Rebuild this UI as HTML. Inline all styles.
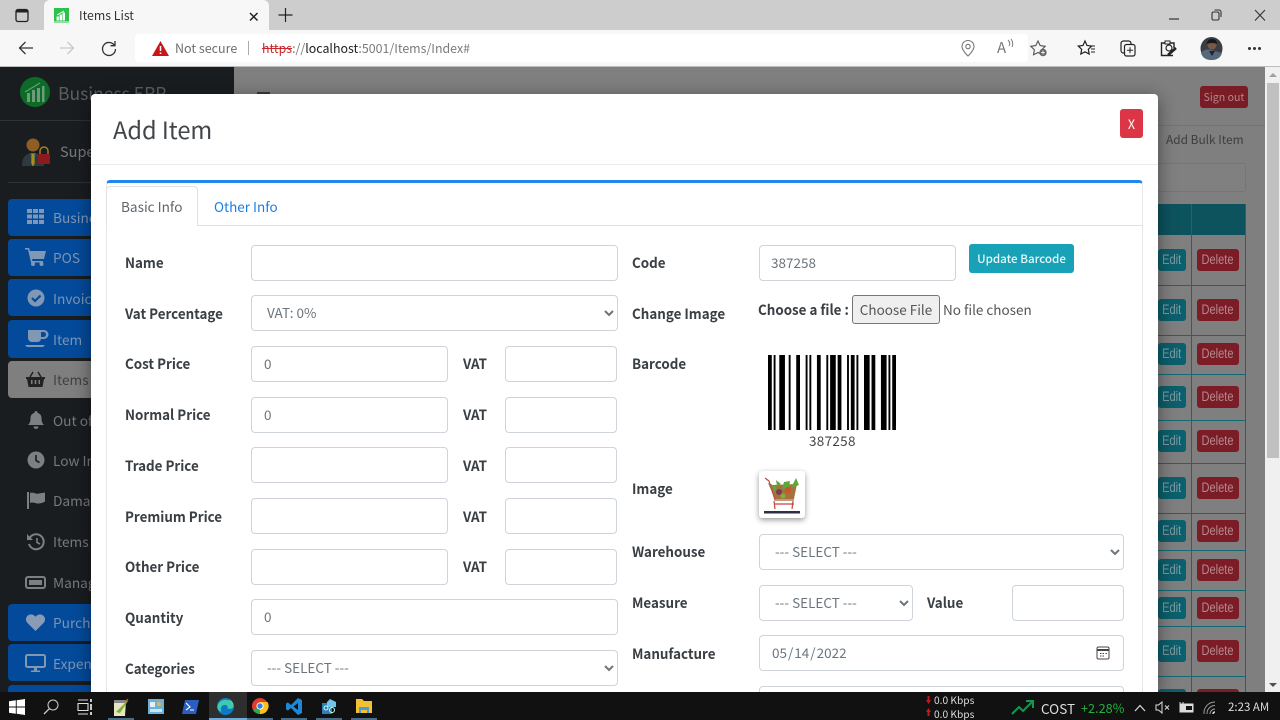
<!DOCTYPE html>
<html lang="en"><head><meta charset="utf-8"><title>Items List</title>
<style>
html,body{margin:0;padding:0;width:1280px;height:720px;overflow:hidden;background:#808080}
*{box-sizing:border-box}
#root{position:relative;width:1280px;height:720px;overflow:hidden;font-family:"Noto Sans CJK JP","Liberation Sans",sans-serif;filter:blur(.35px)}
.a{position:absolute;white-space:nowrap}
svg{position:absolute;overflow:visible}
.side{position:absolute;left:0;top:67px;width:234px;height:625px;background:#1a1d20}
.nav{position:absolute;left:8px;width:200px;border-radius:4px;background:#044a9b}
.st{position:absolute;left:53px;font-size:13.7px;line-height:20px;color:#77797b;white-space:nowrap}
.ic{fill:#7d7f81}
.edit,.del{position:absolute;height:22px;border-radius:3px;font:13.5px/22px "Liberation Sans",sans-serif;text-align:center}
.edit{left:1158px;width:28px;background:#0c5f6c;color:#7f9ca2}
.del{left:1197px;width:42px;background:#7c1c26;color:#b48a8f}
.edit span,.del span{display:inline-block;transform:scaleX(.82)}
.hl{position:absolute;left:1150px;width:96px;height:1px;background:#126a75}
.modal{position:absolute;left:91px;top:94px;width:1067px;height:598px;background:#fff;border-radius:4px 4px 0 0;box-shadow:0 4px 18px rgba(0,0,0,.45)}
.lb{position:absolute;font-size:14.4px;line-height:20px;font-weight:700;color:#3a3f44;white-space:nowrap;transform:scaleX(.93);transform-origin:0 50%}
input.f,select.f{position:absolute;height:35.5px;border:1px solid #ced4da;border-radius:4px;background:#fff;color:#6c757d;font-family:"Noto Sans CJK JP","Liberation Sans",sans-serif;font-size:13.5px;padding:0 12px 2px;margin:0;outline:0}
select.f{padding:0 11px 2px}
input.f::-webkit-calendar-picker-indicator{opacity:0}
.tb{position:absolute;top:692px;left:0;width:1280px;height:28px;background:#111}
.ul{position:absolute;top:718px;height:2px;background:#76b9ed;opacity:.55}
</style></head><body><div id="root">

<!-- browser chrome -->
<div class="a" style="left:0;top:0;width:1280px;height:31px;background:#cdcdcd"></div>
<div class="a" style="left:44px;top:0;width:225px;height:31px;background:#f7f7f7;border-radius:6px 6px 0 0"></div>
<div class="a" style="left:0;top:30px;width:1280px;height:37px;background:#f7f7f7;border-bottom:1px solid #bdbdbd"></div>
<div class="a" style="left:135px;top:34px;width:893px;height:28px;background:#fff;border-radius:4px"></div>

<svg style="left:15px;top:8px" width="15" height="15" viewBox="0 0 15 15"><rect x="1" y="1.5" width="12" height="12" rx="2" fill="none" stroke="#222" stroke-width="1.3"/><path d="M1 2h12v2.500H1z" fill="#222"/></svg>
<div class="a" style="left:54px;top:8px;width:15px;height:15px;background:#2cc04d;border-bottom:2px solid #8fe09f"></div>
<svg style="left:54px;top:8px" width="15" height="15" viewBox="0 0 15 15"><path d="M3 12V9h1.500v3zM6 12V7h1.500v5zM9 12V5h1.500v7zM3 7l7-4" stroke="#fff" stroke-width=".9" fill="#fff"/></svg>
<div class="a" style="left:79px;top:6px;font-size:12.3px;line-height:18px;color:#333">Items List</div>
<svg style="left:248px;top:11px" width="12" height="12" viewBox="0 0 12 12"><path d="M2 2l7.500 7.500M9.500 2L2 9.500" stroke="#222" stroke-width="1.500" fill="none"/></svg>
<svg style="left:278px;top:8px" width="15" height="15" viewBox="0 0 15 15"><path d="M7.500 0v14M.5 7h14" stroke="#222" stroke-width="1.200" fill="none"/></svg>

<svg style="left:18px;top:41px" width="16" height="14" viewBox="0 0 16 14"><path d="M15 7H1.500M7.500 1L1.500 7l6 6" stroke="#333" stroke-width="1.300" fill="none"/></svg>
<svg style="left:59px;top:41px" width="16" height="14" viewBox="0 0 16 14"><path d="M1 7h13.500M8.500 1l6 6-6 6" stroke="#c9c9c9" stroke-width="1.300" fill="none"/></svg>
<svg style="left:101px;top:40px" width="16" height="16" viewBox="0 0 16 16"><path d="M13.500 5.500A6.500 6.500 0 1 0 14.500 9M14 1v4.700H9.500" stroke="#333" stroke-width="1.300" fill="none"/></svg>
<svg style="left:152px;top:41px" width="17" height="15" viewBox="0 0 17 15"><path d="M8.500 0L17 15H0z" fill="#c8171b"/><path d="M8.500 5v5M8.500 11.500v1.500" stroke="#fff" stroke-width="1.500"/></svg>
<div class="a" style="left:175px;top:38px;font-size:12.5px;line-height:19px;color:#6e6e6e">Not secure</div>
<div class="a" style="left:248px;top:41px;width:1px;height:14px;background:#aaa"></div>
<div class="a" style="left:262px;top:39px;font-size:12.4px;line-height:19px;color:#7a7a7a"><span style="color:#c8292c;text-decoration:line-through">https</span>://<span style="color:#222">localhost</span>:5001/Items/Index#</div>

<svg style="left:961px;top:40px" width="14" height="17" viewBox="0 0 14 17"><path d="M7 16S1 10.500 1 6.500a6 6 0 0 1 12 0C13 10.500 7 16 7 16z" fill="none" stroke="#777" stroke-width="1.100"/><circle cx="7" cy="6.500" r="2.200" fill="none" stroke="#777" stroke-width="1.100"/></svg>
<div class="a" style="left:997px;top:38px;font-size:15px;line-height:19px;color:#777">A</div>
<svg style="left:1007px;top:39px" width="7" height="9" viewBox="0 0 7 9"><path d="M1 1q3 3 1 6M4 0q3 4 1 8" stroke="#777" fill="none"/></svg>
<svg style="left:1030px;top:40px" width="18" height="17" viewBox="0 0 18 17"><path d="M8 1l2.200 4.600 5 .7-3.600 3.500.9 5L8 12.500l-4.500 2.300.9-5L.8 6.300l5-.7z" fill="none" stroke="#555" stroke-width="1.100"/><circle cx="13" cy="12.500" r="3.700" fill="#666"/><path d="M11 12.500h4M13 10.500v4" stroke="#fff" stroke-width=".8"/></svg>
<svg style="left:1078px;top:40px" width="17" height="16" viewBox="0 0 17 16"><path d="M7 1l2 4.500 4.700.6-3.400 3.200.9 4.700L7 11.800 2.800 14l.9-4.700L.3 6.100 5 5.500z" fill="none" stroke="#222" stroke-width="1.200"/><path d="M12 6h5M13 9h4M13 12h4" stroke="#222"/></svg>
<svg style="left:1120px;top:40px" width="16" height="17" viewBox="0 0 16 17"><rect x="1" y="1" width="10" height="12" rx="2.500" fill="none" stroke="#222" stroke-width="1.200"/><rect x="4.500" y="4.500" width="10.500" height="11.500" rx="2" fill="#f7f7f7" stroke="#222" stroke-width="1.200"/><path d="M7 10.300h6M10 7.300v6" stroke="#222"/></svg>
<svg style="left:1160px;top:40px" width="17" height="17" viewBox="0 0 17 17"><path d="M5 3H1.500v12.500H13" fill="none" stroke="#222" stroke-width="1.400"/><rect x="5" y="1" width="5" height="3" fill="none" stroke="#222"/><path d="M10 3h4v5" fill="none" stroke="#222" stroke-width="1.400"/><circle cx="9" cy="8" r="3" fill="none" stroke="#222" stroke-width="1.200"/><path d="M8 15l8-7" stroke="#222" stroke-width="2.600"/></svg>
<svg style="left:1200px;top:37px" width="23" height="23" viewBox="0 0 23 23"><ellipse cx="11.500" cy="11.500" rx="11" ry="11.500" fill="#3a3d42"/><path d="M1 16q4-5 10.500-3T22 16q-2 7-10.500 7T1 16z" fill="#55697c"/><circle cx="12" cy="8" r="4.500" fill="#7a5a44"/><path d="M7 7q0-5 5-5t5 5q-5-2-10 0z" fill="#17181a"/><path d="M9 14l3 5 3-5" fill="#223"/></svg>
<div class="a" style="left:1248px;top:47px;width:3px;height:3px;background:#333;border-radius:50%;box-shadow:5px 0 #333,10px 0 #333"></div>
<svg style="left:1170px;top:15px" width="90" height="15" viewBox="0 0 90 15"><path d="M-1 4h10" stroke="#333" stroke-width="1.200"/></svg>
<svg style="left:1211px;top:9px" width="12" height="12" viewBox="0 0 12 12"><rect x="1" y="3" width="7" height="8" rx="1.500" fill="none" stroke="#333" stroke-width="1.100"/><path d="M3.500 1h4.500a2 2 0 0 1 2 2v5" fill="none" stroke="#333" stroke-width="1.100"/></svg>
<svg style="left:1254px;top:9px" width="13" height="13" viewBox="0 0 13 13"><path d="M1 1l10 10.500M11 1L1 11.500" stroke="#333" stroke-width="1.100"/></svg>

<!-- page behind -->
<div class="a" style="left:234px;top:67px;width:1031px;height:625px;background:#7f7f7f"></div>
<div class="a" style="left:234px;top:125px;width:1031px;height:1px;background:#747474"></div>
<div class="a" style="left:257px;top:92px;width:13px;height:2px;background:#3a3a3a"></div>
<div class="a" style="left:1200px;top:86px;width:48px;height:22px;background:#7a1c26;border-radius:3px;color:#b08a8e;font-size:10.6px;line-height:24px;text-align:center">Sign out</div>
<div class="a" style="left:1166px;top:131px;font-size:11.9px;line-height:18px;color:#3e3e3e">Add Bulk Item</div>
<div class="a" style="left:1150px;top:163px;width:96px;height:29px;background:#808080;border:1px solid #757575;border-radius:3px"></div>
<div class="a" style="left:1150px;top:204px;width:96px;height:31px;background:#0d535e"></div>
<div class="a" style="left:1191px;top:204px;width:1px;height:488px;background:#126a75"></div>
<div class="a" style="left:1245px;top:204px;width:1px;height:488px;background:#126a75"></div>
<div class="hl" style="top:285px"></div><div class="hl" style="top:335px"></div><div class="hl" style="top:374px"></div><div class="hl" style="top:420px"></div><div class="hl" style="top:463px"></div><div class="hl" style="top:513px"></div><div class="hl" style="top:550px"></div><div class="hl" style="top:590px"></div><div class="hl" style="top:626px"></div><div class="hl" style="top:676px"></div>
<div class="edit" style="top:249px"><span>Edit</span></div><div class="del" style="top:249px"><span>Delete</span></div>
<div class="edit" style="top:299px"><span>Edit</span></div><div class="del" style="top:299px"><span>Delete</span></div>
<div class="edit" style="top:343px"><span>Edit</span></div><div class="del" style="top:343px"><span>Delete</span></div>
<div class="edit" style="top:386px"><span>Edit</span></div><div class="del" style="top:386px"><span>Delete</span></div>
<div class="edit" style="top:430px"><span>Edit</span></div><div class="del" style="top:430px"><span>Delete</span></div>
<div class="edit" style="top:477px"><span>Edit</span></div><div class="del" style="top:477px"><span>Delete</span></div>
<div class="edit" style="top:520px"><span>Edit</span></div><div class="del" style="top:520px"><span>Delete</span></div>
<div class="edit" style="top:559px"><span>Edit</span></div><div class="del" style="top:559px"><span>Delete</span></div>
<div class="edit" style="top:597px"><span>Edit</span></div><div class="del" style="top:597px"><span>Delete</span></div>
<div class="edit" style="top:640px"><span>Edit</span></div><div class="del" style="top:640px"><span>Delete</span></div>
<div class="edit" style="top:689px"><span>Edit</span></div><div class="del" style="top:689px"><span>Delete</span></div>

<!-- scrollbar -->
<div class="a" style="left:1265px;top:67px;width:15px;height:625px;background:#f0f0f0"></div>
<div class="a" style="left:1267px;top:83px;width:12px;height:375px;background:#c0c0c0"></div>
<div class="a" style="left:1269px;top:73px;width:0;height:0;border:4px solid transparent;border-top:0;border-bottom:4px solid #a0a0a0"></div>
<div class="a" style="left:1269px;top:683px;width:0;height:0;border:4px solid transparent;border-bottom:0;border-top:4px solid #505050"></div>

<!-- sidebar -->
<div class="side"></div>
<svg style="left:20px;top:77px" width="30" height="30" viewBox="0 0 30 30"><circle cx="15" cy="15" r="15" fill="#0b6b27"/><path d="M7 25V16h3v9zM12 25V13h3v12zM17 25V11h3v14zM22 25V9h2.500v16z" fill="#6f9b7c"/><path d="M5 15L20 6" stroke="#6f9b7c" stroke-width="1.200"/></svg>
<div class="st" style="left:58px;top:82px;font-size:17.5px;line-height:24px;color:#5c5e60">Business ERP</div>
<div class="a" style="left:0;top:120px;width:234px;height:1px;background:#303336"></div>
<svg style="left:21px;top:136px" width="30" height="32" viewBox="0 0 30 32"><circle cx="12" cy="9" r="6.500" fill="#8e5e25"/><path d="M1 30q0-13 11-13t11 13z" fill="#2f3a40"/><path d="M9.500 17h5l-1.500 13h-2z" fill="#4d6d80"/><path d="M11 18h2l.8 9-1.800 3-1.800-3z" fill="#a98e17"/><path d="M19 18v-3a4 4 0 0 1 8 0v3" fill="none" stroke="#a08020" stroke-width="1.500"/><rect x="17" y="18" width="12" height="10" rx="1.500" fill="#8e1a20"/></svg>
<div class="st" style="left:60px;top:141px;font-size:14.5px;line-height:22px">Super Admin</div>
<div class="a" style="left:8px;top:182px;width:218px;height:1px;background:#303336"></div>

<div class="nav" style="top:199px;height:37px"></div>
<div class="nav" style="top:239px;height:37px"></div>
<div class="nav" style="top:279px;height:37px"></div>
<div class="nav" style="top:320px;height:38px"></div>
<div class="nav" style="top:361px;height:37px;background:#7f7f7f"></div>
<div class="nav" style="top:604px;height:37px"></div>
<div class="nav" style="top:644px;height:37px"></div>
<div class="nav" style="top:685px;height:37px"></div>

<div class="st" style="top:207px;color:#7a95b5">Business</div>
<div class="st" style="top:247px;color:#7a95b5">POS</div>
<div class="st" style="top:288px;color:#7a95b5">Invoice</div>
<div class="st" style="top:329px;color:#7a95b5">Item</div>
<div class="st" style="top:369px;color:#3f4144">Items</div>
<div class="st" style="top:410px">Out of</div>
<div class="st" style="top:450px">Low Inv</div>
<div class="st" style="top:490px">Damage</div>
<div class="st" style="top:531px">Items</div>
<div class="st" style="top:572px">Manage</div>
<div class="st" style="top:612px;color:#7a95b5">Purchase</div>
<div class="st" style="top:653px;color:#7a95b5">Expense</div>

<svg style="left:26px;top:208px" width="19" height="17" viewBox="0 0 19 17" fill="#8098b4"><path d="M1 1h5v4H1zM7 1h5v4H7zM13 1h5v4h-5zM1 6.500h5v4H1zM7 6.500h5v4H7zM13 6.500h5v4h-5zM1 12h5v4H1zM7 12h5v4H7zM13 12h5v4h-5z"/></svg>
<svg style="left:25px;top:248px" width="21" height="18" viewBox="0 0 21 18" fill="#8098b4"><path d="M0 0h4l1 3h16l-2 8H7l.5 2H18v1.500H6L3 1.500H0z"/><circle cx="8" cy="16" r="2"/><circle cx="16.500" cy="16" r="2"/></svg>
<svg style="left:27px;top:289px" width="18" height="18" viewBox="0 0 18 18"><circle cx="9" cy="9" r="8.500" fill="#8098b4"/><path d="M5 9l3 3 5.500-5.500" stroke="#044a9b" stroke-width="2.200" fill="none"/></svg>
<svg style="left:25px;top:330px" width="21" height="18" viewBox="0 0 21 18" fill="#8098b4"><path d="M3 0h16a2 2 0 0 1 0 9h-3a4 4 0 0 1-4 3H7a4 4 0 0 1-4-4zM16 2v5h2.500a2.500 2.500 0 0 0 0-5z" fill-rule="evenodd"/><path d="M0 15h20l-2 2H2z"/></svg>
<svg style="left:26px;top:371px" width="19" height="16" viewBox="0 0 19 16" fill="#222"><path d="M0 6h19v2h-1l-1.500 8H2.500L1 8H0zM5 9v4h1.500V9zM8.700 9v4h1.600V9zM12.500 9v4H14V9z" fill-rule="evenodd"/><path d="M4 6l3-5M15 6l-3-5" stroke="#222" stroke-width="1.500"/></svg>
<svg class="ic" style="left:28px;top:411px" width="16" height="18" viewBox="0 0 16 18"><path d="M8 0a1.500 1.500 0 0 1 1.500 1.700C12 2.500 13.500 4.500 13.500 7c0 4 1 5.500 2.500 7H0c1.500-1.500 2.500-3 2.500-7 0-2.500 1.500-4.500 4-5.300A1.500 1.500 0 0 1 8 0zM5.500 15.500h5a2.500 2.500 0 0 1-5 0z"/></svg>
<svg style="left:27px;top:451px" width="18" height="18" viewBox="0 0 18 18"><circle cx="9" cy="9" r="8.500" fill="#7d7f81"/><path d="M9 4v5.500l3.500 2" stroke="#1a1d20" stroke-width="1.600" fill="none"/></svg>
<svg class="ic" style="left:27px;top:492px" width="18" height="17" viewBox="0 0 18 17"><path d="M0 0h2v17H0zM3 1c3-1.500 6 1.500 9 .5 2-.5 4-.5 6-1v9c-2 1.500-4 1.500-6 2-3 .5-6-2-9-.5z"/></svg>
<svg style="left:27px;top:533px" width="18" height="17" viewBox="0 0 18 17"><path d="M3 4.500A7.500 7.500 0 1 1 2 11" stroke="#7d7f81" stroke-width="2" fill="none"/><path d="M0 1v6h6z" fill="#7d7f81"/><path d="M10 5v4.500l3 1.500" stroke="#7d7f81" stroke-width="1.600" fill="none"/></svg>
<svg style="left:25px;top:576px" width="21" height="13" viewBox="0 0 21 13"><rect x="1" y="1" width="19" height="11" rx="2" fill="none" stroke="#7d7f81" stroke-width="2"/><rect x="4" y="4" width="13" height="5" fill="#7d7f81"/></svg>
<svg style="left:26px;top:614px" width="19" height="17" viewBox="0 0 19 17" fill="#8a9cb4"><path d="M9.500 17L1.500 9a5 5 0 0 1 0-7.200 5 5 0 0 1 7 0l1 1 1-1a5 5 0 0 1 7 0 5 5 0 0 1 0 7.200z"/></svg>
<svg style="left:25px;top:654px" width="21" height="19" viewBox="0 0 21 19"><rect x="1" y="1" width="19" height="12" rx="1.500" fill="none" stroke="#8098b4" stroke-width="2"/><path d="M9 14h3v2.500h3V18H6v-1.500h3z" fill="#8098b4"/></svg>

<!-- modal -->
<div class="modal"></div>
<div class="a" style="left:113px;top:111px;font-size:23.6px;line-height:36px;color:#41464b">Add Item</div>
<div class="a" style="left:1120px;top:109px;width:23px;height:29px;background:#dc3545;border-radius:3px;color:#fff;font-size:12.5px;line-height:29px;text-align:center">X</div>
<div class="a" style="left:91px;top:164px;width:1067px;height:1px;background:#e9ecef"></div>
<div class="a" style="left:106px;top:180px;width:1037px;height:520px;border:1px solid #e4e6e9;border-top:3px solid #1e88f0;border-radius:4px 4px 0 0;background:#fff"></div>
<div class="a" style="left:107px;top:225px;width:1035px;height:1px;background:#dee2e6"></div>
<div class="a" style="left:106px;top:186px;width:92px;height:40px;background:#fff;border:1px solid #dee2e6;border-bottom:0;border-radius:4px 4px 0 0"></div>
<div class="a" style="left:121px;top:195.5px;font-size:13.6px;line-height:21px;color:#60666c">Basic Info</div>
<div class="a" style="left:214px;top:195.5px;font-size:13.5px;line-height:21px;color:#1c7fe6">Other Info</div>

<div class="lb" style="left:125px;top:253px">Name</div>
<div class="lb" style="left:125px;top:304px">Vat Percentage</div>
<div class="lb" style="left:125px;top:354px">Cost Price</div>
<div class="lb" style="left:125px;top:405px">Normal Price</div>
<div class="lb" style="left:125px;top:456px">Trade Price</div>
<div class="lb" style="left:125px;top:507px">Premium Price</div>
<div class="lb" style="left:125px;top:557px">Other Price</div>
<div class="lb" style="left:125px;top:608px">Quantity</div>
<div class="lb" style="left:125px;top:659px">Categories</div>
<div class="lb" style="left:463px;top:354px">VAT</div>
<div class="lb" style="left:463px;top:405px">VAT</div>
<div class="lb" style="left:463px;top:456px">VAT</div>
<div class="lb" style="left:463px;top:507px">VAT</div>
<div class="lb" style="left:463px;top:557px">VAT</div>

<input class="f" style="left:251px;top:245px;width:367px">
<select class="f" style="left:251px;top:295px;width:367px"><option>VAT: 0%</option></select>
<input class="f" value="0" style="left:251px;top:346px;width:197px">
<input class="f" value="0" style="left:251px;top:397px;width:197px">
<input class="f" style="left:251px;top:447px;width:197px">
<input class="f" style="left:251px;top:498px;width:197px">
<input class="f" style="left:251px;top:549px;width:197px">
<input class="f" value="0" style="left:251px;top:599px;width:367px">
<select class="f" style="left:251px;top:650px;width:367px"><option>--- SELECT ---</option></select>
<input class="f" style="left:505px;top:346px;width:112px">
<input class="f" style="left:505px;top:397px;width:112px">
<input class="f" style="left:505px;top:447px;width:112px">
<input class="f" style="left:505px;top:498px;width:112px">
<input class="f" style="left:505px;top:549px;width:112px">

<div class="lb" style="left:632px;top:253px">Code</div>
<div class="lb" style="left:632px;top:304px">Change Image</div>
<div class="lb" style="left:632px;top:354px">Barcode</div>
<div class="lb" style="left:632px;top:479px">Image</div>
<div class="lb" style="left:632px;top:542px">Warehouse</div>
<div class="lb" style="left:632px;top:593px">Measure</div>
<div class="lb" style="left:632px;top:644px">Manufacture</div>
<div class="lb" style="left:927px;top:593px">Value</div>

<input class="f" value="387258" style="left:759px;top:245px;width:197px;padding-left:11px">
<div class="a" style="left:969px;top:244px;width:105px;height:29px;background:#17a2b8;border-radius:3px;color:#e6f6f8;font-size:11.6px;font-weight:500;line-height:31px;text-align:center">Update Barcode</div>
<div class="lb" style="left:758px;top:300px">Choose a file :</div>
<div class="a" style="left:852px;top:295px;width:88px;height:29px;background:#efefef;border:1px solid #767676;border-radius:3px;color:#555;font-size:13.5px;line-height:27px;text-align:center">Choose File</div>
<div class="a" style="left:943px;top:299px;font-size:13.5px;line-height:20px;color:#555">No file chosen</div>

<svg style="left:768px;top:355px" width="128" height="75" viewBox="0 0 68 75" preserveAspectRatio="none" fill="#000"><path d="M0 0h2v75H0zM3 0h1v75H3zM6 0h3v75H6zM11 0h1v75h-1zM15 0h2v75h-2zM20 0h1v75h-1zM22 0h1v75h-1zM26 0h2v75h-2zM31 0h1v75h-1zM33 0h3v75h-3zM37 0h2v75h-2zM42 0h1v75h-1zM44 0h2v75h-2zM47 0h1v75h-1zM51 0h3v75h-3zM55 0h2v75h-2zM60 0h3v75h-3zM64 0h1v75h-1zM66 0h2v75h-2z"/></svg>
<div class="a" style="left:809px;top:431px;font-size:13.5px;line-height:19px;letter-spacing:.3px;color:#444">387258</div>

<div class="a" style="left:759px;top:471px;width:46px;height:47px;background:#fff;border-radius:3px;box-shadow:0 2px 6px rgba(0,0,0,.4)"></div>
<svg style="left:759px;top:471px" width="46" height="47" viewBox="0 0 46 47"><path d="M9 12l5 2 24-1-3 15H16z" fill="#a6723c"/><path d="M11 13l7 3-2 5zM37 7l3 7-8 3zM25 11l6-1-1 7-7 1zM17 9l5 4-4 2z" fill="#5fa63c"/><circle cx="20" cy="21" r="3" fill="#7a3b55"/><circle cx="29" cy="19" r="3" fill="#c9562c"/><circle cx="24" cy="25" r="2.500" fill="#7fb03a"/><path d="M6 7l4 3 6 19h19" stroke="#b95040" stroke-width="1.200" fill="none"/><path d="M15 30l1 8M34 30l-1 8M15 33h20" stroke="#c0483a" stroke-width="1.200" fill="none"/><path d="M5 40h36v2.500H5z" fill="#2d3040"/></svg>

<select class="f" style="left:759px;top:534px;width:365px"><option>--- SELECT ---</option></select>
<select class="f" style="left:759px;top:585px;width:154px"><option>--- SELECT ---</option></select>
<input class="f" style="left:1012px;top:585px;width:112px">
<input class="f" type="date" value="2022-05-14" style="left:759px;top:635px;width:365px;padding-left:11px">
<svg style="left:1096px;top:646px" width="14" height="14" viewBox="0 0 14 14" fill="none" stroke="#444"><rect x="1" y="1" width="12" height="12" rx="1.500"/><path d="M1 4h12" stroke-width="2"/><path d="M4 7.500h1.500M6.500 7.500H8M9.500 7.500H11M4 10h1.500M6.500 10H8" stroke-width="1"/></svg>
<input class="f" style="left:759px;top:686px;width:365px">

<!-- taskbar -->
<div class="tb"></div>
<div class="a" style="left:209px;top:692px;width:38px;height:28px;background:#2e2e2e"></div>
<div class="ul" style="left:108px;width:26px"></div><div class="ul" style="left:209px;width:38px;opacity:.9"></div><div class="ul" style="left:247px;width:26px"></div><div class="ul" style="left:281px;width:26px"></div><div class="ul" style="left:316px;width:26px"></div><div class="ul" style="left:351px;width:26px"></div>
<svg style="left:9px;top:699px" width="16" height="16" viewBox="0 0 16 16" fill="#fff"><path d="M0 2.300L6.800 1.300V7.500H0zM7.700 1.200L16 0V7.500H7.700zM0 8.500H6.800V14.700L0 13.700zM7.700 8.500H16V16L7.700 14.800z"/></svg>
<svg style="left:43px;top:699px" width="16" height="16" viewBox="0 0 16 16"><circle cx="10" cy="6" r="5" fill="none" stroke="#ccc" stroke-width="1"/><path d="M6.300 9.700L1 15" stroke="#ccc" stroke-width="1.300"/></svg>
<svg style="left:77px;top:699px" width="16" height="16" viewBox="0 0 16 16" fill="none" stroke="#ddd"><path d="M1 1h10M1 15h10M1 4.500h10v7H1z" stroke-width="1.100"/><path d="M14 0v3M14 5v6M14 13v3" stroke-width="1.800"/></svg>
<svg style="left:113px;top:699px" width="16" height="17" viewBox="0 0 16 17"><path d="M1 2h12l-1 15H1z" fill="#e8e6c0"/><path d="M1 1h12v3H1z" fill="#888"/><path d="M3 13l9-9 2-3 1 1-2 3-6 9z" fill="#7fb03a"/><path d="M13 2l2-2" stroke="#c43" stroke-width="1.500"/></svg>
<svg style="left:148px;top:699px" width="16" height="15" viewBox="0 0 16 15"><rect width="16" height="15" fill="#6cb2d8"/><rect x="2" y="3" width="5" height="5" fill="#e4f1f8"/><circle cx="11" cy="5" r="2" fill="#e8b83a"/><path d="M2 10h12v3H2z" fill="#cde4f1"/></svg>
<svg style="left:182px;top:700px" width="17" height="14" viewBox="0 0 17 14"><path d="M3 0h14l-3 14H0z" fill="#2a5fc0"/><path d="M4 3l4 4-4 3M8 10h4" stroke="#fff" stroke-width="1.100" fill="none"/></svg>
<svg style="left:217px;top:698px" width="17" height="17" viewBox="0 0 17 17"><circle cx="8.500" cy="8.500" r="8.500" fill="#1079c4"/><path d="M.5 8C2 .5 14-1 16.500 7.500c.5 3-3 4-6 3 1-2-1-4-3.500-3.500C4 7.500 3 10.500 4.500 14 2 13 0 11 .5 8z" fill="#3fc9b0"/><path d="M12 1.500q4 2 4.500 6-2-3-4.500-6z" fill="#7fe07e"/></svg>
<svg style="left:252px;top:698px" width="16" height="16" viewBox="0 0 16 16"><circle cx="8" cy="8" r="8" fill="#e33b2e"/><path d="M8 8L1 12a8 8 0 0 0 8 4z" fill="#2da94f"/><path d="M8 4h7.500A8 8 0 0 1 8 16z" fill="#f9c21b"/><circle cx="8" cy="8" r="3.600" fill="#fff"/><circle cx="8" cy="8" r="2.700" fill="#3b7de0"/></svg>
<svg style="left:286px;top:698px" width="16" height="17" viewBox="0 0 16 17"><path d="M12 0l4 2v13l-4 2-7-7-3 2.500-2-1V5.500l2-1 3 2.500zM12 5L7.500 8.500 12 12z" fill="#1e88d8" fill-rule="evenodd"/></svg>
<svg style="left:321px;top:698px" width="17" height="17" viewBox="0 0 17 17"><path d="M1 5h10v11H1z" fill="#2c7fb8"/><path d="M9 1l6 3v5H6V4z" fill="#6fc4e8"/><circle cx="5" cy="10" r="2" fill="none" stroke="#cfe" /><circle cx="11" cy="12" r="2.500" fill="none" stroke="#cfe"/></svg>
<svg style="left:356px;top:698px" width="16" height="16" viewBox="0 0 16 16"><path d="M0 1h6l2 2h8v12H0z" fill="#f2c032"/><path d="M3 9h10v6h-2v-3H5v3H3z" fill="#4a9ade"/></svg>

<div class="a" style="left:934px;top:692px;font-size:10.2px;line-height:15px;color:#ddd">0.0 Kbps</div>
<div class="a" style="left:934px;top:706px;font-size:10.2px;line-height:15px;color:#ddd">0.0 Kbps</div>
<svg style="left:926px;top:695px" width="5" height="22" viewBox="0 0 5 22" fill="#c21a1a"><path d="M1.500 1h2v4H5L2.500 9 0 5h1.500zM2.500 13L5 17H3.500v4h-2v-4H0z"/></svg>
<svg style="left:1011px;top:700px" width="23" height="15" viewBox="0 0 23 15"><path d="M1 14l7-7 4 4 9-9M15 1h7v7" stroke="#109a50" stroke-width="2" fill="none"/></svg>
<div class="a" style="left:1041px;top:699px;font-size:13.5px;line-height:18px;color:#ddd">COST</div>
<div class="a" style="left:1081px;top:699px;font-size:12.7px;line-height:18px;color:#22b040">+2.28%</div>
<svg style="left:1134px;top:704px" width="12" height="8" viewBox="0 0 12 8"><path d="M1 7l5-5.500L11 7" stroke="#ddd" stroke-width="1.200" fill="none"/></svg>
<svg style="left:1155px;top:701px" width="15" height="13" viewBox="0 0 15 13"><path d="M1 4h2.500L7 1v11L3.500 9H1z" fill="none" stroke="#ddd"/><path d="M10 4.500l4 4M14 4.500l-4 4" stroke="#ddd"/></svg>
<svg style="left:1178px;top:701px" width="16" height="13" viewBox="0 0 16 13"><rect x="2" y="3" width="13" height="8" fill="#ddd" stroke="#ddd"/><rect x="8" y="5" width="6" height="4" fill="#111"/><path d="M2 1v3M5 1v3" stroke="#ddd"/></svg>
<svg style="left:1203px;top:701px" width="13" height="14" viewBox="0 0 13 14" fill="none" stroke="#9a9a9a"><path d="M1 13A11 11 0 0 1 12 1M4 13a8 8 0 0 1 8-8.500M7 13a5 5 0 0 1 5-5"/><path d="M10 13a2 2 0 0 1 2-2" stroke="#ddd" stroke-width="1.500"/></svg>
<div class="a" style="left:1228px;top:699px;font-size:11.500px;line-height:16px;color:#ddd">2:23 AM</div>

</div></body></html>
